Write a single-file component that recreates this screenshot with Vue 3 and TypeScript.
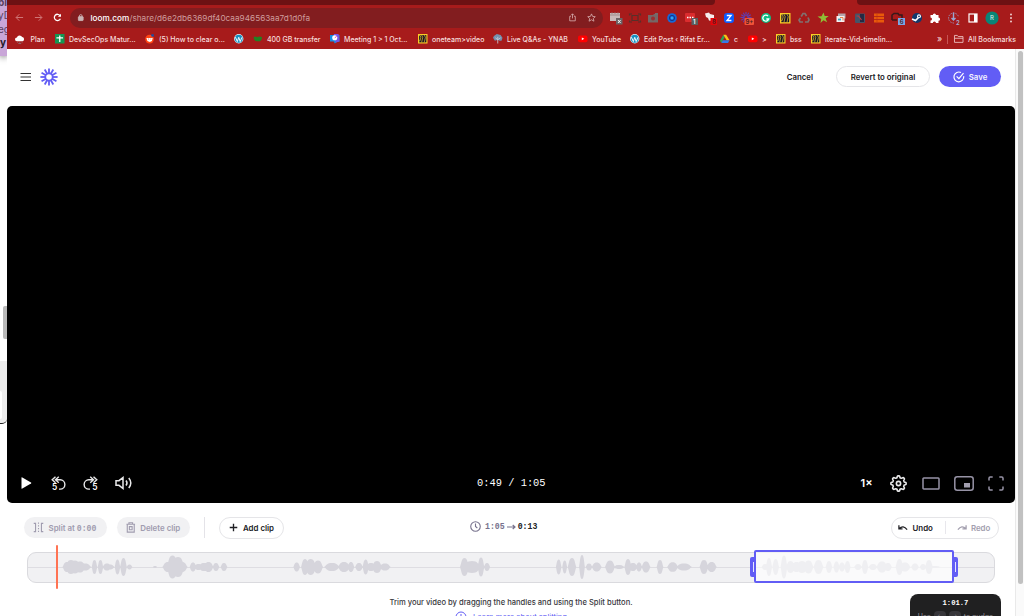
<script setup lang="ts">
interface Bookmark { icon: string; label: string }

const bookmarks: Bookmark[] = [
  { icon: 'cloud', label: 'Plan' },
  { icon: 'grid', label: 'DevSecOps Matur...' },
  { icon: 'reddit', label: '(5) How to clear o...' },
  { icon: 'wp', label: '' },
  { icon: 'leaf', label: '400 GB transfer' },
  { icon: 'meet', label: 'Meeting 1 > 1 Oct...' },
  { icon: 'miro', label: 'oneteam>video' },
  { icon: 'tree', label: 'Live Q&As - YNAB' },
  { icon: 'yt', label: 'YouTube' },
  { icon: 'wp', label: 'Edit Post ‹ Rifat Er...' },
  { icon: 'drive', label: 'c' },
  { icon: 'yt', label: '>' },
  { icon: 'miro', label: 'bss' },
  { icon: 'miro', label: 'iterate-Vid-timelin...' },
]

const extensions: string[] = [
  'calendar', 'frame', 'camera', 'target', 'dots', 'docs', 'zed', 'burst', 'gram', 'miro', 'recycle',
  'star', 'store', 'tool', 'rows', 'boxes', 'steam', 'puzzle', 'download', 'panel', 'avatar', 'more',
]

// Each lobe of the waveform: centre x, half width, half height
type Lobe = [number, number, number]
const lobes: Lobe[] = [
  [67, 4, 5], [71, 5, 7], [75, 5, 6.5], [80, 5, 5.5], [85, 5.5, 3.5], [94.5, 2.5, 7], [100.5, 2.5, 7],
  [107, 4, 3.5], [110, 4, 2.5], [117.5, 2.5, 7.5], [123.5, 3, 9], [129.5, 2.5, 2.5], [155, 2, 1],
  [168, 5, 5], [172.5, 5, 11.5], [178, 6, 10], [182, 5, 5], [193, 3, 4.5], [198.5, 4, 3], [204, 5, 4], [208.5, 4.5, 5],
  [216, 3, 4], [224, 3, 4], [296.7, 3, 4.5], [305, 3.5, 8], [310.7, 5, 8], [318, 4.5, 6.5], [332, 7, 4],
  [344, 5.5, 5], [351, 3, 5], [359, 3.5, 4], [365.7, 2.8, 7.5], [371, 4.5, 4], [377, 4.5, 6], [385, 5, 3.5],
  [464.5, 4, 9], [472, 8, 6], [481, 3, 9.5], [487, 2.8, 4], [558.7, 2.5, 7.5], [564.7, 2.2, 6.5],
  [572, 3.8, 9], [582, 2.6, 12], [589, 3, 3.5], [596.7, 4.5, 4.5], [610, 4.5, 6.5], [619, 5, 2],
  [628, 3.2, 8], [633, 4, 4], [639, 2.8, 4.5], [646, 4, 5.5], [660, 3, 7], [672.7, 5, 4.8], [684, 7, 3.5],
  [704, 4, 7], [711.7, 4.5, 5], [765, 3, 3], [769, 2.8, 9], [775.7, 3, 8], [784, 3, 11.5],
  [790.5, 4, 6], [796.5, 5, 5], [802, 5, 6], [808.5, 4.5, 6.5], [818.5, 4.5, 7], [829, 3, 6], [836.5, 2.8, 5.5],
  [842, 3, 4.5], [847.5, 2.8, 6], [858, 3.5, 3], [865, 3, 7], [873, 4, 3], [882, 5, 5.5], [888, 3.5, 4],
  [899.5, 3.5, 8], [905, 5, 4.5], [915, 3.5, 3.5], [923, 3, 3], [929, 3.5, 7], [935, 5, 1],
]
const cy = 14
const wave: string = lobes
  .map(([x, halfWidth, h]) => {
    const c = x - 28
    const w = halfWidth * 1.12
    const k = w * 0.65
    return `M${c - w} ${cy}C${c - k} ${cy - h * 0.5} ${c - k} ${cy - h} ${c} ${cy - h}S${c + k} ${cy - h * 0.5} ${c + w} ${cy}C${c + k} ${cy + h * 0.5} ${c + k} ${cy + h} ${c} ${cy + h}S${c - k} ${cy + h * 0.5} ${c - w} ${cy}Z`
  })
  .join('')

const rays: number[] = Array.from({ length: 12 }, (_, i) => i * 30)

// Gear outline: eight rounded teeth around the centre (8, 8)
const gear: string = Array.from({ length: 96 }, (_, i) => {
  const a = (i / 96) * Math.PI * 2
  const r = 6.35 + 0.85 * Math.tanh(2.2 * Math.cos(a * 8))
  return `${i ? 'L' : 'M'}${(8 + r * Math.cos(a)).toFixed(2)} ${(8 + r * Math.sin(a)).toFixed(2)}`
}).join('') + 'Z'
</script>

<template>
  <div class="desktop">
    <aside class="behind">
      <div class="note"><span>bi</span><span>yD</span><span>eg</span><b>y</b></div>
      <div class="side-page"><i class="side-thumb"></i></div>
      <div class="behind-foot"><i></i></div>
    </aside>

    <div class="window">
      <div class="chrome">
        <div class="tabs"><i class="tabs-left"></i><i class="tabs-right"></i></div>
        <div class="nav">
          <svg class="nav-ico" viewBox="0 0 10 10"><path d="M9 5H1.300M4.800 1.400L1.200 5l3.600 3.600" /></svg>
          <svg class="nav-ico" viewBox="0 0 10 10"><path d="M1 5h7.700M5.200 1.400L8.800 5 5.200 8.600" /></svg>
          <svg class="nav-ico reload" viewBox="0 0 10 10"><path d="M8.200 6.300A3.500 3.500 0 1 1 7.800 2.800" /><path class="solid" d="M8.900.8v3.500H5.400z" /></svg>
          <div class="url">
            <svg class="lock" viewBox="0 0 6 8"><rect x=".3" y="3" width="5.400" height="4.500" rx=".6" /><path d="M1.500 3.300V2.200a1.500 1.500 0 0 1 3 0v1.100" /></svg>
            <span class="address"><b>loom.com</b>/share/d6e2db6369df40caa946563aa7d1d0fa</span>
            <svg class="url-ico" viewBox="0 0 10 10"><path d="M3.300 3.700H1.900v5h6.200v-5H6.700M5 6V1M3.300 2.600L5 .9l1.700 1.700" /></svg>
            <svg class="url-ico" viewBox="0 0 10 10"><path d="M5 1l1.200 2.800 3 .3L7 6.100l.7 3L5 7.500 2.300 9.100l.7-3L.8 4.100l3-.3z" /></svg>
          </div>
          <div class="extensions">
            <svg v-for="name in extensions" :key="name" class="ext" viewBox="0 0 14 14">
              <g v-if="name === 'calendar'"><path fill="#c9b9b9" d="M1 2h10v8H1z" /><path d="M1 4h10M3 1v2M6 1v2M9 1v2" stroke="#8c7777" stroke-width=".7" /><rect x="7" y="7" width="6.500" height="6.500" fill="#6c6466" /><path d="M9 9l2.600 3M11.600 9L9 12" stroke="#fff" stroke-width=".9" /></g>
              <g v-else-if="name === 'frame'" fill="none" stroke="#57302a" stroke-width="1.200"><path d="M4 4.500h6v5H4zM1.500 4.500V3h2.500M12.500 4.500V3H10M1.500 9.500V11h2.500M12.500 9.500V11H10" /></g>
              <g v-else-if="name === 'camera'"><path fill="#756766" d="M2 4h5l1-1h4v8.500H2z" /><circle cx="7" cy="7.500" r="2" fill="#9b3030" /><path fill="#776b69" d="M9 2h3v2H9z" /></g>
              <g v-else-if="name === 'target'"><circle cx="7" cy="7" r="4.800" fill="#1668d8" /><circle cx="7" cy="7" r="2.600" fill="none" stroke="#193482" /><circle cx="7" cy="7" r="1.200" fill="#35a9ef" /></g>
              <g v-else-if="name === 'dots'"><rect x="1" y="2" width="10" height="9" rx="1" fill="#db2c2e" /><path d="M3 6.500h6.500" stroke="#fff" stroke-width="1.500" stroke-dasharray="1.500 1" /><rect x="7.500" y="7" width="6.500" height="7" fill="#595e60" /><text x="9" y="12.800" class="badge-text">1</text></g>
              <g v-else-if="name === 'docs'"><path fill="#f5eded" d="M2 2.500l4-1 1 1.500 4 1v4l-2 2-3-.5-1-2.500-2-1z" /><rect x="7.500" y="7" width="6.500" height="7" fill="#e5050a" /><text x="9" y="12.800" class="badge-text dark">8</text></g>
              <g v-else-if="name === 'zed'"><rect x="2" y="2" width="10" height="10" rx="3" fill="#0b5cff" /><path d="M4.800 4.500h4.300L5 9.500h4.400" fill="none" stroke="#fff" stroke-width="1.300" /></g>
              <g v-else-if="name === 'burst'"><path v-for="r in rays" :key="r" d="M6 5V1" stroke="#5b3fb8" stroke-width="1.100" :transform="`rotate(${r} 6 6.500)`" /><rect x="4.500" y="7" width="9.500" height="7" rx="1" fill="#f15438" /><text x="5.500" y="12.600" class="badge-text dark">9+</text></g>
              <g v-else-if="name === 'gram'"><circle cx="7" cy="7" r="5" fill="#10bd83" /><path d="M9 5a3 3 0 1 0 .7 3H7.300" fill="none" stroke="#fff" stroke-width="1.300" /></g>
              <g v-else-if="name === 'miro'"><rect x="2" y="2" width="10.500" height="10.500" fill="#facd26" /><rect x="3.300" y="3.300" width="7.900" height="7.900" fill="#15142c" /><path d="M3.200 3.600h1.200l.8 2.400-1.100 3.600h-.9M6 3.300l1.200 2.300-1.200 5.600M9 3.300l1.200 2.300L9 11.200" fill="none" stroke="#facd26" stroke-width=".7" /></g>
              <g v-else-if="name === 'recycle'" fill="none" stroke="#817070" stroke-width="1.700"><path d="M4.200 5.500L6 2.500h2l1.500 2.500M11 6.500l1 2.500-1 2H8M6 11H3L2 9l1.500-2" /></g>
              <path v-else-if="name === 'star'" fill="#8fbd35" d="M7.500 1.500l1.200 3.600 4-.2-3.100 2.500 1.500 3.900-3.600-2-3 2.600.7-4L1.500 5.500l4-.3z" />
              <g v-else-if="name === 'store'"><path fill="#b5a6aa" d="M4 2.500h7.500v5H4z" /><path fill="#f6f1f1" d="M2.500 5h8v6h-8z" /><path d="M4 8.500h3" stroke="#35a6c0" stroke-width="1.800" /><path d="M6 6.500h3v3" fill="none" stroke="#e68249" /></g>
              <g v-else-if="name === 'tool'"><rect x="2" y="2.500" width="10" height="9.500" rx="1" fill="#455568" /><path fill="#252942" d="M7 3h4v8H7z" /><path d="M3.500 5h2l3 4" fill="none" stroke="#b83c43" stroke-width="1.200" /></g>
              <g v-else-if="name === 'rows'" stroke="#e95a0a" stroke-width="2.500"><path d="M2 3.800h10M2 7h10M2 10.300h10" /><path d="M5 3v8" stroke="#b52e16" stroke-width=".5" /></g>
              <g v-else-if="name === 'boxes'"><path fill="none" stroke="#37191b" stroke-width="1.500" d="M1 9V4l2-1.500h4l1 1.500h3v3M1 9h5" /><rect x="7" y="7" width="7" height="7" fill="#79a6e8" /><text x="8.700" y="12.700" class="badge-text dark">6</text></g>
              <g v-else-if="name === 'steam'"><circle cx="7" cy="7" r="5" fill="#12396b" /><path d="M2 8l3.500 1.500L9 6" fill="none" stroke="#fff" stroke-width="1.700" /><circle cx="9" cy="5.300" r="2" fill="#fff" /><circle cx="9" cy="5.300" r=".9" fill="#12396b" /></g>
              <path v-else-if="name === 'puzzle'" fill="#fff" d="M2.500 4h2.300a1.600 1.600 0 1 1 3.200 0h2.500v2.600a1.600 1.600 0 1 1 0 3.200V12H8a1.600 1.600 0 0 0-3.200 0H2.500V9.400a1.500 1.500 0 0 0 0-3z" />
              <g v-else-if="name === 'download'" fill="none" stroke="#99a6d0"><path stroke-dasharray="1.500 1" stroke-width=".8" d="M7 12a5 5 0 1 1 4.500-6" /><path stroke-width="1.400" d="M6.500 1.500V9M4.500 7l2 2 2-2" /><text x="9" y="13.500" class="badge-text pale">2</text></g>
              <g v-else-if="name === 'panel'"><rect x="3" y="3" width="8" height="8" fill="none" stroke="#fff" stroke-width="1.200" /><path fill="#fff" d="M8 3h3v8H8z" /></g>
              <g v-else-if="name === 'avatar'"><circle cx="7" cy="7" r="6.600" fill="#0a8577" /><text x="5" y="9.400" class="initial">R</text></g>
              <g v-else fill="#f1d5d5"><circle cx="7" cy="3.500" r=".95" /><circle cx="7" cy="7" r=".95" /><circle cx="7" cy="10.500" r=".95" /></g>
            </svg>
          </div>
        </div>
        <div class="bookmarks">
          <div v-for="(b, i) in bookmarks" :key="i" class="bookmark">
            <svg viewBox="0 0 10 10" :class="'mark-' + b.icon">
              <g v-if="b.icon === 'cloud'"><path fill="#fff" d="M2 6.500a2 2 0 0 1 0-4 3 3 0 0 1 5.500-.3A2.200 2.200 0 0 1 8 6.500z" /><path d="M2 7.500h1M4.500 7.500h1M7 7.500h1M3.500 9h3" stroke="#8f7375" stroke-width="1" /></g>
              <g v-else-if="b.icon === 'grid'"><path fill="#159653" d="M0 0h10v10H0z" /><path d="M5 1.500v7M1.500 4h7" stroke="#fff" stroke-width="1.400" /></g>
              <g v-else-if="b.icon === 'reddit'"><circle cx="4.800" cy="5.300" r="4.600" fill="#ff4514" /><path fill="#fff" d="M1.500 4.200h6.600l-.8 3.200L5 8.400l-2.500-1z" /><path d="M3.500 5.300h.8M5.800 5.300h.8" stroke="#e6471d" stroke-width="1" /><circle cx="8" cy="1.500" r="1.500" fill="#244b9b" /></g>
              <g v-else-if="b.icon === 'wp'"><circle cx="5" cy="5" r="4.900" fill="#dff3fb" /><circle cx="5" cy="5" r="4.100" fill="#168fc1" /><path d="M1.500 3.300l2 4.700L5 3.500 6.500 8l1.800-4.500" fill="none" stroke="#fff" stroke-width="1" /></g>
              <path v-else-if="b.icon === 'leaf'" fill="#238023" d="M.5 3.500q2-1.500 4 0 2.500-1.500 5 0-.5 4.200-3 4.200H4Q1 7 .5 3.500" />
              <g v-else-if="b.icon === 'meet'"><path fill="#168de5" d="M0 1h10v7H8l-3 2-1-2H0z" /><path fill="#7852e6" d="M4 0h5l1 8-4 1z" /><circle cx="5" cy="4" r="2.700" fill="#fff" /><path d="M5 4l2-1.500" stroke="#dd4a97" /></g>
              <g v-else-if="b.icon === 'miro'"><path fill="#facd26" d="M0 0h10v10H0z" /><path fill="#171528" d="M1.200 1.200h7.600v7.600H1.200z" /><path d="M1.200 1.500h1l.8 2.300L2 7.300h-.8M3.800 1.200L5 3.500 3.800 8.800M6.600 1.200l1.200 2.300-1.200 5.300" fill="none" stroke="#facd26" stroke-width=".7" /></g>
              <g v-else-if="b.icon === 'tree'"><path fill="#7591ae" d="M1 2l3-2 4 1 2 3-1 3H7L5 6 2 7 0 4z" /><path d="M5 3v7M2.500 4L5 6l3-2" fill="none" stroke="#c8cbd7" stroke-width=".9" /></g>
              <g v-else-if="b.icon === 'yt'"><rect y="1.600" width="10" height="7" rx="2" fill="#f00" /><path fill="#fff" d="M4 3.600v3L6.600 5.100z" /></g>
              <g v-else><path fill="#29a45a" d="M3.500.7L0 7l1.500 2.500L5 3.200z" /><path fill="#fbc116" d="M3.500.7h3L10 6.500H7z" /><path fill="#367be8" d="M1.500 9.500L3 6.500h7l-1.500 3z" /></g>
            </svg>
            <span v-if="b.label">{{ b.label }}</span>
          </div>
          <span class="more-marks">»</span>
          <i class="mark-rule"></i>
          <div class="bookmark all">
            <svg viewBox="0 0 10 10"><path d="M.5 8.800V1.500h3l1 1.200h5v6.100zM.5 4.500h9" fill="none" stroke="#eec5c5" stroke-width=".9" /></svg>
            <span>All Bookmarks</span>
          </div>
        </div>
      </div>

      <div class="page">
        <main class="editor">
          <header class="header">
            <svg class="burger" viewBox="0 0 12 10"><path d="M.5 1.500h10.500M.5 5h10.500M.5 8.500h10.500" /></svg>
            <svg class="logo" viewBox="0 0 18 18"><path v-for="r in rays" :key="r" d="M9 5.600V.4" :transform="`rotate(${r} 9 9)`" /><circle cx="9" cy="9" r="3.700" /></svg>
            <span class="cancel">Cancel</span>
            <button class="revert">Revert to original</button>
            <button class="save">
              <svg viewBox="0 0 12 12"><path d="M10.700 5.200A4.900 4.900 0 1 1 8 1.500M3.600 5.300l2.300 2.300 4.600-5.500" /></svg>
              <span>Save</span>
            </button>
          </header>

          <section class="player">
            <div class="controls">
              <svg class="play" viewBox="0 0 10 12"><path d="M0 .8Q0 0 .8.4l8.700 5q.8.600 0 1.200l-8.700 5Q0 12 0 11.200z" /></svg>
              <svg class="skip" viewBox="0 0 16 16"><path d="M4.800.8L1.300 4l3.500 3.200M8.300.8L4.800 4l3.500 3.200M5 4h4.800a4.900 4.900 0 0 1 0 10H8.500" /><text x="1" y="15">5</text></svg>
              <svg class="skip second" viewBox="0 0 16 16"><path d="M11.200.8L14.700 4l-3.500 3.200M7.700.8L11.200 4 7.700 7.200M11 4H6.200a4.900 4.900 0 0 0 0 10h1.300" /><text x="9.800" y="15">5</text></svg>
              <svg class="volume" viewBox="0 0 18 14"><path d="M1 4.700h3l4-3.200v11l-4-3.200H1zM11 4.500q2 2.500 0 5M13.800 2q4 5 0 10" /></svg>
              <span class="time">0:49 / 1:05</span>
              <span class="rate">1×</span>
              <svg class="gear" viewBox="0 0 16 16"><path :d="gear" /><circle cx="8" cy="8" r="2" /></svg>
              <svg class="wide" viewBox="0 0 18 13"><rect x="1" y="1" width="16" height="11" rx=".8" /></svg>
              <svg class="pip" viewBox="0 0 20 15"><rect x=".8" y=".8" width="18.400" height="13.400" rx="2.500" /><rect class="fill" x="10" y="7" width="6" height="4.500" /></svg>
              <svg class="full" viewBox="0 0 16 15"><path d="M1 4.500V2.200Q1 1 2.200 1h2.500M11.300 1h2.500Q15 1 15 2.200v2.300M15 10.500v2.300Q15 14 13.800 14h-2.500M4.700 14H2.200Q1 14 1 12.800v-2.300" /></svg>
            </div>
          </section>

          <section class="actions">
            <button class="pill split">
              <svg viewBox="0 0 12 12"><path d="M.8 1.500h2v9h-2M11.200 1.500h-2v9h2" /><path d="M6 .5v11" stroke-dasharray="1.500 1.500" /></svg>
              <span>Split at <code>0:00</code></span>
            </button>
            <button class="pill delete">
              <svg viewBox="0 0 10 12"><path d="M.3 2.500h9.400M3 2.300V.8h4v1.500M1.200 2.500V11h7.600V2.500M3.500 5h3v3.500h-3z" /></svg>
              <span>Delete clip</span>
            </button>
            <i class="rule"></i>
            <button class="outline add">
              <svg viewBox="0 0 10 10"><path d="M5 .8v8.400M.8 5h8.400" /></svg>
              <span>Add clip</span>
            </button>
            <div class="length">
              <svg viewBox="0 0 12 12"><circle cx="6" cy="6" r="5.200" /><path d="M6 2.800V6l2 1.600" /></svg>
              <code>1:05</code>
              <svg class="arrow" viewBox="0 0 9 6"><path d="M0 3h8M5.700 1L8 3 5.700 5" /></svg>
              <code class="after">0:13</code>
            </div>
            <div class="outline history">
              <svg viewBox="0 0 11 7"><path d="M1 1v4h4M1.300 4.700q4.500-4.500 8.700 1.100" /></svg>
              <span>Undo</span>
              <i></i>
              <svg class="muted" viewBox="0 0 11 7"><path d="M10 1v4H6M9.700 4.700Q5.200.2 1 5.800" /></svg>
              <span class="muted">Redo</span>
            </div>
          </section>

          <section class="timeline">
            <div class="track">
              <svg viewBox="0 0 966 29"><path class="base" d="M0 14.500H966" /><path class="wave" :d="wave" /></svg>
            </div>
            <i class="playhead"></i>
            <div class="selection"><i class="grip left"></i><i class="grip right"></i></div>
          </section>

          <footer class="help">
            <p>Trim your video by dragging the handles and using the Split button.</p>
            <a>
              <svg viewBox="0 0 12 12"><circle cx="6" cy="6" r="5" /><path d="M6 3v3.500h2" /></svg>
              <span>Learn more about splitting</span>
            </a>
          </footer>

          <div class="tooltip">
            <b>1:01.7</b>
            <div class="hint"><span>Use</span><kbd>←</kbd><kbd>→</kbd><span>to nudge</span></div>
          </div>
        </main>
        <div class="scrollbar"><i></i></div>
      </div>
    </div>
  </div>
</template>

<style>
body { overflow: hidden; background: #fff; }
</style>

<style scoped>
* { box-sizing: border-box; }
svg { display: block; flex: none; overflow: visible; }
button { border: 0; padding: 0; font: inherit; color: inherit; background: none; }
.desktop { display: grid; grid-template-columns: 7px 1017px; width: 1024px; height: 616px; overflow: hidden; font-family: Inter, "Liberation Sans", sans-serif; color: #202024; }
.behind { display: flex; flex-direction: column; overflow: hidden; background: #fff; }
.note { display: flex; flex-direction: column; width: 7px; height: 56px; overflow: hidden; background: #c9a6d8; font-size: 10px; line-height: 13.300px; box-shadow: 0 1px 6px #777; color: #59405f; white-space: nowrap; flex: none; }
.note span { margin-left: -2px; }
.note span:first-child { margin-top: -4px; font-weight: 700; }
.note b { color: #261b2a; }
.side-page { height: 305px; display: flex; padding: 250px 0 0 3px; flex: none; }
.side-thumb { width: 4px; height: 33px; border-radius: 2px 0 0 2px; background: #b9b9b9; }
.behind-foot { height: 63px; background: #ededed; border-bottom: 1.500px solid #222; border-bottom-right-radius: 5px; padding-top: 30px; flex: none; }
.behind-foot i { display: block; width: 2px; height: 28px; background: #fff; border-radius: 0 2px 2px 0; }
.window { display: flex; flex-direction: column; height: 616px; min-width: 0; }
.chrome { height: 49px; background: #a71b1b; color: #f7dede; flex: none; }
.tabs { display: flex; justify-content: space-between; height: 5px; }
.tabs-left { width: 708px; background: #6d1113; border-bottom-right-radius: 4px; }
.tabs-right { width: 167px; background: #6d1113; border-bottom-left-radius: 4px; }
.nav { display: flex; align-items: center; height: 25px; padding-left: 8px; }
.nav-ico { width: 9px; height: 9px; margin-right: 10px; fill: none; stroke: #cf7777; stroke-width: 1.100; }
.nav-ico.reload { stroke: #fff; stroke-width: 1.400; margin-right: 8px; }
.nav-ico .solid { fill: #fff; stroke: none; }
.url { display: flex; align-items: center; width: 532.500px; height: 20px; border-radius: 10px; background: #821d1f; padding: 0 7px 0 8px; }
.lock { width: 5.500px; height: 7px; fill: #c9b4b4; stroke: #c9b4b4; margin-right: 7px; }
.lock path { fill: none; }
.address { flex: 1; font-size: 8.200px; letter-spacing: .03px; color: #cf9c9c; white-space: nowrap; }
.address b { font-weight: 500; color: #fff; }
.url-ico { width: 9px; height: 9px; margin-left: 9.500px; fill: none; stroke: #d7afaf; stroke-width: .9; }
.extensions { display: grid; grid-template-columns: repeat(22, 18.800px); width: 414px; margin-left: 4px; flex: none; }
.ext { width: 14px; height: 14px; justify-self: center; }
.badge-text { font-size: 6px; fill: #fff; font-weight: 600; }
.badge-text.dark { fill: #4b1d20; }
.badge-text.pale { fill: #a6b1d7; stroke: none; }
.initial { font-size: 6px; fill: #e5f5f3; }
.bookmarks { display: grid; grid-template-columns: 40px 90px 89px 19px 77px 88px 75px 85px 52px 90px 28px 28px 35px 126px 10px 7px 65px; align-items: center; height: 18px; padding-left: 8px; }
.bookmark { display: flex; align-items: center; gap: 4.500px; white-space: nowrap; font-size: 7px; font-weight: 500; min-width: 0; }
.bookmark svg { width: 9.500px; height: 9.500px; }
.bookmark .mark-cloud { margin-right: 1.500px; position: relative; top: 1px; }
.more-marks { font-size: 9px; line-height: 10px; }
.mark-rule { width: 1px; height: 9px; background: #c85555; }
.page { display: flex; flex: 1; min-height: 0; background: #fff; }
.editor { position: relative; display: flex; flex-direction: column; width: 1008px; overflow: hidden; }
.header { display: flex; align-items: center; height: 57px; padding: 0 14px 2px 13px; flex: none; font-size: 7.850px; font-weight: 600; }
.burger { width: 12px; height: 10px; stroke: #333; stroke-width: 1.200; margin-right: 8px; }
.logo { width: 18px; height: 18px; fill: none; stroke: #625df5; stroke-width: 1.800; }
.cancel { margin-left: auto; margin-right: 23px; }
.revert { width: 94px; height: 21px; border: 1px solid #e5e5e8; border-radius: 11px; margin-right: 9px; }
.save { display: flex; align-items: center; justify-content: center; gap: 4px; width: 62px; height: 21px; border-radius: 11px; background: #625df5; color: #f5f4ff; }
.save svg { width: 12px; height: 12px; fill: none; stroke: #fff; stroke-width: 1.200; }
.player { display: flex; flex-direction: column; justify-content: flex-end; height: 396.500px; border-radius: 5px; background: #000; flex: none; }
.controls { display: flex; align-items: center; height: 39px; padding-left: 14px; color: #fff; }
.controls svg { fill: none; stroke: #e9e9ea; stroke-width: 1.500; }
.controls .play { width: 11px; height: 12px; fill: #fff; stroke: none; margin-right: 18.500px; }
.skip { width: 15px; height: 15px; margin-right: 17px; }
.skip text { font-size: 9px; fill: #fff; stroke: none; font-weight: 600; }
.volume { width: 18px; height: 14px; }
.time { margin-left: 344.500px; width: 71px; font-family: "Liberation Mono", monospace; font-size: 10.400px; white-space: pre; }
.rate { margin-left: 312.500px; width: 14px; font-size: 11px; font-weight: 600; }
.gear { width: 17px; height: 17px; margin-left: 15.500px; }
.wide { width: 18px; height: 13px; margin-left: 15px; }
.pip { width: 20px; height: 15px; margin-left: 13.500px; }
.full { width: 16px; height: 15px; margin-left: 14px; }
.controls .wide, .controls .pip, .controls .full { stroke: #9793a6; }
.controls .pip .fill { fill: #a29eae; stroke: none; }
.actions { display: flex; align-items: center; height: 22px; margin-top: 14px; padding: 0 16px 0 17px; flex: none; font-size: 7.900px; font-weight: 600; }
.actions button { display: flex; align-items: center; justify-content: center; gap: 5px; white-space: nowrap; }
.actions svg { fill: none; stroke: currentColor; stroke-width: 1.200; }
.actions .pill { height: 21px; border-radius: 11px; background: #f1f1f3; color: #a09caf; }
.split { width: 83px; padding-right: 2px; }
.split svg { width: 11px; height: 11px; }
code { font-family: "Liberation Mono", monospace; font-size: 8.200px; font-weight: 700; }
.pill.delete { width: 73px; margin-left: 10px; padding-right: 1px; }
.delete svg { width: 9.500px; height: 11px; }
.rule { width: 1px; height: 21px; background: #e4e3e8; margin: 0 14px; }
.actions .outline { border: 1px solid #e5e5e8; border-radius: 11px; height: 22px; }
.outline.add { width: 65px; }
.add svg { width: 9px; height: 9px; stroke-width: 1.500; }
.length { display: flex; align-items: center; margin-left: 186px; padding-bottom: 2px; color: #77728d; }
.length svg { width: 11px; height: 11px; margin-right: 4px; }
.length .arrow { width: 9px; height: 6px; margin: 0 2px; }
.after { color: #202024; }
.history { display: flex; align-items: center; width: 108.500px; margin-left: auto; padding-left: 6px; }
.history svg { width: 10px; height: 7px; margin-right: 5px; stroke-width: 1.400; }
.history i { width: 1px; height: 13px; background: #e8e7ec; margin: 0 11px 0 12px; }
.history .muted { color: #a29eae; }
.history svg.muted { margin-right: 4px; }
.timeline { position: relative; height: 31px; margin: 13.500px 20px 0; flex: none; }
.track { height: 31px; border: 1px solid #dadade; border-radius: 9px; background: #f1f1f3; overflow: hidden; }
.track svg { width: 966px; height: 29px; }
.base { stroke: #dedde2; stroke-width: 1; }
.wave { fill: #d6d5dc; }
.playhead { position: absolute; left: 29px; top: -7px; width: 2px; height: 44px; background: #ff7353; border-radius: 1px; }
.selection { position: absolute; left: 727px; top: -2px; width: 200px; height: 33px; border: 2px solid #625df5; border-radius: 2px; background: rgba(255, 255, 255, .62); }
.grip { position: absolute; top: 5px; width: 6px; height: 20px; background: #625df5; border-radius: 2px; }
.grip::after { content: ""; position: absolute; left: 2.500px; top: 5px; width: 1.500px; height: 10px; background: #e7e6ff; }
.grip.left { left: -6px; }
.grip.right { right: -6px; }
.help { display: flex; flex-direction: column; align-items: center; margin-top: 14px; font-size: 7.600px; color: #38373c; }
.help p { margin: 0; line-height: 12px; font-weight: 500; white-space: nowrap; }
.help a { display: flex; align-items: center; gap: 6px; height: 12px; margin-top: 2px; color: #625df5; white-space: nowrap; }
.help svg { width: 12px; height: 12px; fill: none; stroke: #625df5; }
.tooltip { position: absolute; left: 903px; top: 545px; width: 91px; height: 42px; border-radius: 8px; background: #202021; color: #fff; text-align: center; padding-top: 5px; font-size: 8px; }
.tooltip b { display: block; font-family: "Liberation Mono", monospace; font-size: 7.200px; line-height: 9px; }
.hint { display: flex; align-items: center; justify-content: center; gap: 3px; margin-top: 3px; line-height: 12px; color: #96949b; font-size: 7px; white-space: nowrap; }
.hint kbd { width: 12px; height: 12px; border-radius: 4px; background: #37363a; font: inherit; font-size: 7px; color: #88868f; }
.scrollbar { width: 9px; background: #fafafa; border-left: 1px solid #e9e9e9; padding: 2px 0 0 1.500px; }
.scrollbar i { display: block; width: 5.500px; height: 533px; border-radius: 3px; background: #c1c1c1; }
</style>
